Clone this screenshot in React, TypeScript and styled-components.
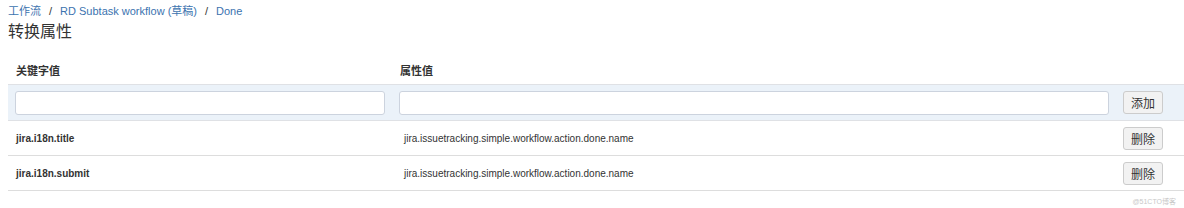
import React from 'react';
import styled, { createGlobalStyle } from 'styled-components';

const GlobalStyle = createGlobalStyle`
  html, body {
    margin: 0;
    padding: 0;
    background: #ffffff;
  }
  body {
    font-family: Arial, "Liberation Sans", "Noto Sans CJK SC", sans-serif;
    color: #333333;
  }
`;

const Page = styled.div`
  position: relative;
  width: 1184px;
  height: 208px;
  padding: 4px 0 0 8px;
  box-sizing: border-box;
  overflow: hidden;
`;

const Breadcrumbs = styled.div`
  display: flex;
  align-items: center;
  gap: 8px;
  font-size: 11px;
  line-height: 14px;
  color: #3b73af;
`;

const Crumb = styled.a`
  color: #3b73af;
  text-decoration: none;
`;

const Sep = styled.span`
  color: #333333;
`;

const Title = styled.h1`
  margin: 4px 0 0;
  font-size: 16px;
  line-height: 20px;
  font-weight: normal;
  color: #333333;
`;

const Table = styled.table`
  margin-top: 19px;
  width: 1176px;
  border-collapse: collapse;
  font-size: 10px;
`;

const HeadCell = styled.th`
  text-align: left;
  font-size: 11px;
  font-weight: bold;
  padding: 0 8px 5px;
  height: 18px;
  color: #333333;
  border-bottom: 1px solid #dfe1e5;
`;

const AddRow = styled.tr`
  background: #ebf2f9;
  td {
    height: 35px;
    border-bottom: 1px solid #dfe1e5;
  }
`;

const Row = styled.tr`
  td {
    height: 34px;
    border-bottom: 1px solid #dddddd;
  }
`;

const Cell = styled.td<{ bold?: boolean; $pad?: number }>`
  padding: 0 ${(p) => (p.$pad ?? 8)}px;
  font-weight: ${(p) => (p.bold ? 'bold' : 'normal')};
  color: #333333;
  vertical-align: middle;
`;

const TextInput = styled.input`
  display: block;
  box-sizing: border-box;
  width: 100%;
  height: 24px;
  border: 1px solid #ccd3de;
  border-radius: 3px;
  background: #ffffff;
  margin-top: 1px;
`;

const Button = styled.button`
  box-sizing: border-box;
  height: 23px;
  padding: 0 7px;
  border: 1px solid #cccccc;
  border-radius: 3px;
  background: #f2f2f2;
  color: #333333;
  font-family: inherit;
  font-size: 12px;
`;

const Watermark = styled.div`
  position: absolute;
  right: 8px;
  bottom: 2px;
  font-size: 7px;
  color: #c8c8c8;
`;

const rows = [
  { key: 'jira.i18n.title', value: 'jira.issuetracking.simple.workflow.action.done.name' },
  { key: 'jira.i18n.submit', value: 'jira.issuetracking.simple.workflow.action.done.name' },
];

export default function App() {
  return (
    <>
      <GlobalStyle />
      <Page>
        <Breadcrumbs>
          <Crumb>工作流</Crumb>
          <Sep>/</Sep>
          <Crumb>RD Subtask workflow (草稿)</Crumb>
          <Sep>/</Sep>
          <Crumb>Done</Crumb>
        </Breadcrumbs>
        <Title>转换属性</Title>
        <Table>
          <colgroup>
            <col style={{ width: 384 }} />
            <col style={{ width: 724 }} />
            <col />
          </colgroup>
          <thead>
            <tr>
              <HeadCell>关键字值</HeadCell>
              <HeadCell>属性值</HeadCell>
              <HeadCell />
            </tr>
          </thead>
          <tbody>
            <AddRow>
              <Cell $pad={7}>
                <TextInput />
              </Cell>
              <Cell $pad={7}>
                <TextInput />
              </Cell>
              <Cell $pad={7}>
                <Button>添加</Button>
              </Cell>
            </AddRow>
            {rows.map((r) => (
              <Row key={r.key}>
                <Cell bold>{r.key}</Cell>
                <Cell $pad={12}>{r.value}</Cell>
                <Cell $pad={7}>
                  <Button>删除</Button>
                </Cell>
              </Row>
            ))}
          </tbody>
        </Table>
        <Watermark>@51CTO博客</Watermark>
      </Page>
    </>
  );
}
